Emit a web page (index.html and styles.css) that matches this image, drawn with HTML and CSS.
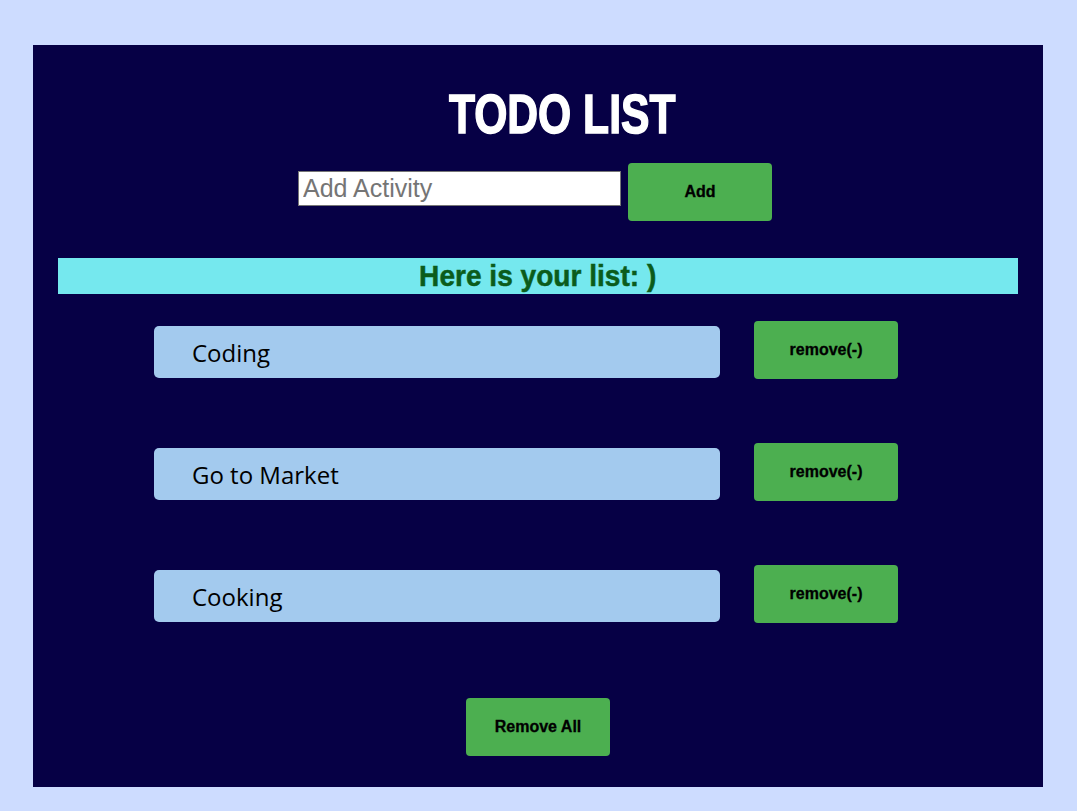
FILE: index.html
```html
<!DOCTYPE html>
<html lang="en">
<head>
<meta charset="utf-8">
<title>Todo List</title>
<link rel="stylesheet" href="styles.css">
</head>
<body>
<div class="app">
  <h1 class="title"><span class="title-text">TODO LIST</span></h1>
  <div class="add-row">
    <input class="add-input" type="text" placeholder="Add Activity">
    <button class="btn add-btn">Add</button>
  </div>
  <h2 class="banner"><span class="banner-text">Here is your list: )</span></h2>
  <ul class="list">
    <li class="row"><div class="item">Coding</div><button class="btn remove-btn">remove(-)</button></li>
    <li class="row"><div class="item">Go to Market</div><button class="btn remove-btn">remove(-)</button></li>
    <li class="row"><div class="item">Cooking</div><button class="btn remove-btn">remove(-)</button></li>
  </ul>
  <div class="footer">
    <button class="btn remove-all">Remove All</button>
  </div>
</div>
</body>
</html>
```

FILE: styles.css
```css
html, body {
  margin: 0;
  padding: 0;
}
body {
  background: #cddcff;
  padding: 45px 34px 24px 33px;
  font-family: "Liberation Sans", Arial, sans-serif;
}
.app {
  background: #060045;
  width: 1010px;
  height: 742px;
  box-sizing: border-box;
  padding: 39px 25px 0 25px;
}
.title {
  margin: 0;
  padding-left: 49px;
  text-align: center;
  font-size: 55px;
  line-height: 60px;
  font-weight: bold;
  color: #ffffff;
}
.title-text {
  display: inline-block;
  transform: scaleX(0.775);
  -webkit-text-stroke: 1.5px #ffffff;
}
.add-row {
  display: flex;
  justify-content: center;
  align-items: flex-start;
  gap: 7px;
  margin-top: 19px;
  padding-right: 6px;
}
.add-input {
  margin: 8px 0 0 0;
  width: 323px;
  height: 35px;
  box-sizing: border-box;
  border: 1px solid #767676;
  padding: 0 4px;
  font-family: "Liberation Sans", Arial, sans-serif;
  font-size: 25px;
  color: #000;
  background: #fff;
  outline: none;
}
.add-input::placeholder {
  color: #757575;
}
.btn {
  width: 144px;
  height: 58px;
  border: none;
  border-radius: 4px;
  background: #4caf50;
  color: #000;
  font-family: "Liberation Sans", Arial, sans-serif;
  font-weight: bold;
  font-size: 16px;
  padding: 0;
  cursor: pointer;
  -webkit-text-stroke: 0.3px #000;
}
.banner {
  margin: 37px 0 0 0;
  height: 36px;
  line-height: 36px;
  background: #75e8ee;
  color: #0b5c1b;
  text-align: center;
  font-size: 30px;
  font-weight: bold;
}
.banner-text {
  display: inline-block;
  transform: scaleX(0.936);
  -webkit-text-stroke: 0.5px #0b5c1b;
}
.list {
  list-style: none;
  margin: 27px 0 0 0;
  padding: 0 0 0 96px;
  display: flex;
  flex-direction: column;
  gap: 64px;
}
.row {
  display: flex;
  align-items: flex-start;
  gap: 34px;
}
.item {
  margin-top: 5px;
  width: 566px;
  height: 52px;
  box-sizing: border-box;
  padding: 1px 0 0 38px;
  border-radius: 5px;
  background: #a3caee;
  color: #000;
  font-family: "Open Sans", sans-serif;
  font-size: 24px;
  line-height: 51px;
}
.footer {
  display: flex;
  justify-content: center;
  margin-top: 75px;
}
```
